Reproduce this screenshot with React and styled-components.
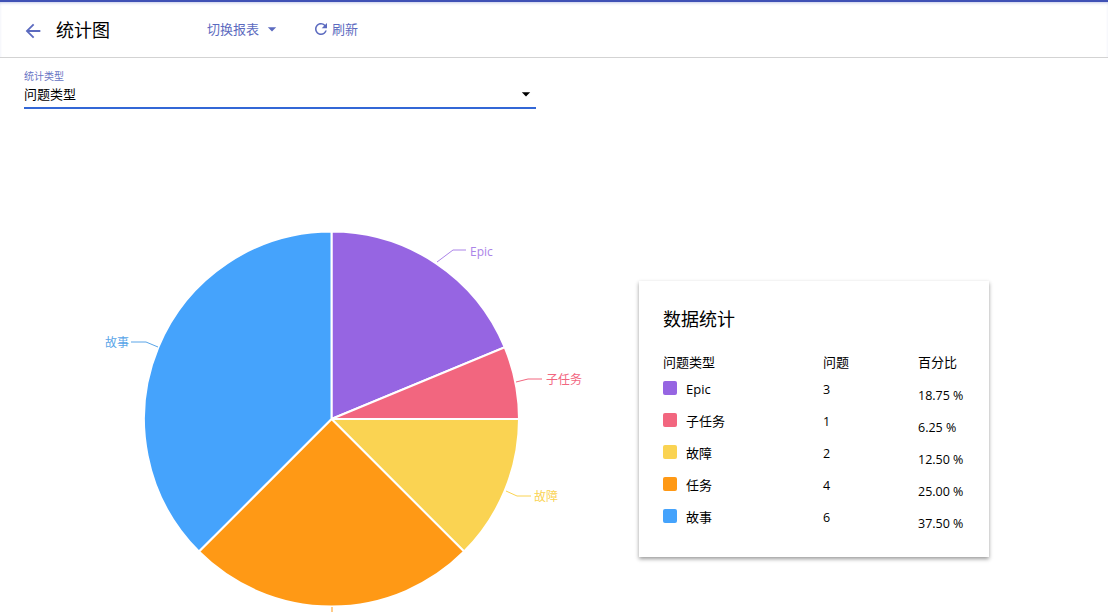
import React from 'react';
import styled, { createGlobalStyle } from 'styled-components';
import { MdArrowBack, MdArrowDropDown, MdRefresh } from 'react-icons/md';

const FONT = '"Open Sans", "Noto Sans CJK SC", sans-serif';

const GlobalStyle = createGlobalStyle`
    html, body {
        margin: 0;
        height: 612px;
        overflow: hidden;
        background: #fff;
        font-family: ${FONT};
        color: #000;
    }
`;

const Page = styled.div`
    height: 612px;
    overflow: hidden;
    display: flex;
    flex-direction: column;
`;

const Header = styled.header`
    height: 58px;
    box-sizing: border-box;
    flex: none;
    display: flex;
    align-items: center;
    padding: 0 0 0 22px;
    border-top: 2px solid #3f51b5;
    border-bottom: 1px solid #d3d3d3;
    box-shadow: inset 0 2px 3px -1px rgba(63, 81, 181, 0.3);
`;

const BackButton = styled.div`
    width: 22px;
    height: 22px;
    color: #3f51b5;
    opacity: 0.85;
    font-size: 22px;
    display: flex;
    margin: 3px 12px 0 0;
`;

const Title = styled.div`
    width: 151px;
    font-size: 18px;
    line-height: 24px;
`;

const ToolButton = styled.div`
    display: flex;
    align-items: center;
    font-size: 13px;
    line-height: 18px;
    color: #3f51b5;
    opacity: 0.85;
    margin-top: -2px;
    margin-right: ${p => p.$gap}px;
`;

const Filter = styled.div`
    flex: none;
    width: 512px;
    margin: 12px 0 0 24px;
    padding-bottom: 1px;
    border-bottom: 2px solid #3367d6;
    box-sizing: border-box;
`;

const FilterLabel = styled.div`
    font-size: 10px;
    line-height: 12px;
    color: #3f51b5;
    opacity: 0.8;
`;

const FilterValue = styled.div`
    display: flex;
    justify-content: space-between;
    align-items: center;
    font-size: 13px;
    line-height: 18px;
    height: 24px;
    svg {
        font-size: 20px;
        margin-right: 0;
    }
`;

const Content = styled.main`
    display: flex;
    align-items: flex-start;
`;

const ChartBox = styled.div`
    flex: none;
    width: 639px;
    height: 503px;
`;

const Card = styled.section`
    width: 350px;
    height: 276px;
    box-sizing: border-box;
    margin-top: 172px;
    padding: 24px;
    background: #fff;
    box-shadow: 0 2px 4px rgba(0, 0, 0, 0.4);
`;

const CardTitle = styled.h3`
    margin: 0 0 20px;
    font-size: 18px;
    font-weight: 400;
    line-height: 28px;
`;

const Table = styled.div`
    display: grid;
    grid-template-columns: 160px 95px 1fr;
    grid-auto-rows: 32px;
    font-size: 13px;
    line-height: 18px;
`;

const HeadCell = styled.div`
    height: 26px;
`;

const NameCell = styled.div`
    display: flex;
    align-items: center;
    height: 18px;
    margin-top: -5px;
`;

const Swatch = styled.span`
    width: 14px;
    height: 14px;
    border-radius: 2px;
    margin: -2px 9px 0 0;
    background: ${p => p.$color};
`;

const CountCell = styled.div`
    margin-top: -4px;
    font-size: 12.5px;
`;

const PercentCell = styled.div`
    margin-top: 2px;
    font-size: 12.5px;
`;

const rows = [
    { name: 'Epic', count: 3, percent: '18.75 %', color: '#9665e2', labelColor: '#ab84e8', line: '437,262 453,250 466,250', x: 470, y: 256, anchor: 'start', label: true },
    { name: '子任务', count: 1, percent: '6.25 %', color: '#f2667f', labelColor: '#f2667f', line: '516,382 528,379 542,379', x: 546, y: 384, anchor: 'start', label: true },
    { name: '故障', count: 2, percent: '12.50 %', color: '#fad352', labelColor: '#fad352', line: '506,491 517,496 531,496', x: 534, y: 501, anchor: 'start', label: true },
    // its label lies below the fold, only the start of the line shows
    { name: '任务', count: 4, percent: '25.00 %', color: '#ff9915', labelColor: '#ff9915', line: '332,607 332,620', label: false },
    { name: '故事', count: 6, percent: '37.50 %', color: '#45a3fc', labelColor: '#5aa5e8', line: '158,347 146,342 131,342', x: 129, y: 347, anchor: 'end', label: true },
];

// the svg starts below the filter, page coordinates are shifted by this
const CHART_TOP = 109;
const CX = 331.5;
const CY = 419;
const R = 187.5;

const slicePath = (fromPct, toPct) => {
    const point = pct => {
        const a = (pct / 100) * Math.PI * 2 - Math.PI / 2;
        return `${(CX + R * Math.cos(a)).toFixed(2)} ${(CY + R * Math.sin(a)).toFixed(2)}`;
    };
    const large = toPct - fromPct > 50 ? 1 : 0;
    return `M${CX} ${CY} L${point(fromPct)} A${R} ${R} 0 ${large} 1 ${point(toPct)} Z`;
};

const PieChart = () => {
    let total = 0;
    return (
        <svg width="639" height="503" viewBox={`0 ${CHART_TOP} 639 503`} style={{ display: 'block' }}>
            {rows.map(r => {
                const from = total;
                total += parseFloat(r.percent);
                return (
                    <g key={r.name}>
                        <path d={slicePath(from, total)} fill={r.color} stroke="#fff" strokeWidth="2" />
                        <polyline points={r.line} fill="none" stroke={r.labelColor} strokeWidth="1" />
                        {r.label && <text x={r.x} y={r.y} fontSize="12" fill={r.labelColor} textAnchor={r.anchor} fontFamily={FONT}>{r.name}</text>}
                    </g>
                );
            })}
        </svg>
    );
};

const App = () => (
    <Page>
        <GlobalStyle />
        <Header>
            <BackButton><MdArrowBack /></BackButton>
            <Title>统计图</Title>
            <ToolButton $gap={30}>切换报表<MdArrowDropDown size={20} style={{ marginLeft: 3 }} /></ToolButton>
            <ToolButton $gap={0}><MdRefresh size={18} style={{ marginRight: 2 }} />刷新</ToolButton>
        </Header>
        <Filter>
            <FilterLabel>统计类型</FilterLabel>
            <FilterValue>问题类型<MdArrowDropDown /></FilterValue>
        </Filter>
        <Content>
            <ChartBox><PieChart /></ChartBox>
            <Card>
                <CardTitle>数据统计</CardTitle>
                <Table>
                    <HeadCell>问题类型</HeadCell>
                    <HeadCell>问题</HeadCell>
                    <HeadCell>百分比</HeadCell>
                    {rows.map(r => (
                        <React.Fragment key={r.name}>
                            <NameCell><Swatch $color={r.color} />{r.name}</NameCell>
                            <CountCell>{r.count}</CountCell>
                            <PercentCell>{r.percent}</PercentCell>
                        </React.Fragment>
                    ))}
                </Table>
            </Card>
        </Content>
    </Page>
);

export default App;
